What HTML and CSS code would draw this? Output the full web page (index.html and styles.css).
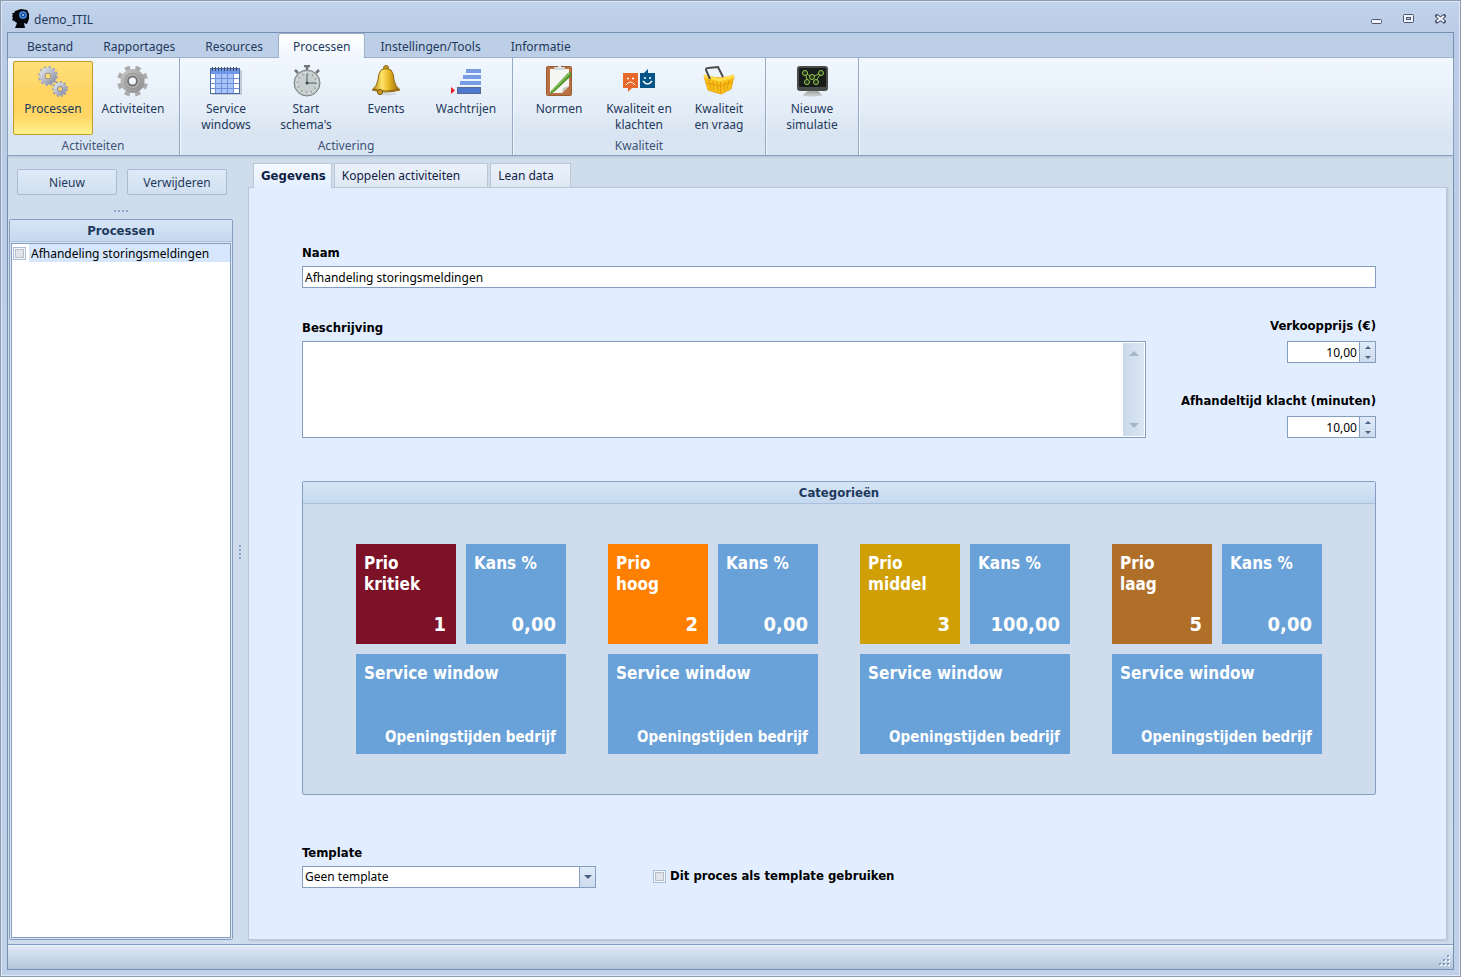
FILE: index.html
```html
<!DOCTYPE html>
<html lang="nl">
<head>
    <meta charset="UTF-8">
    <meta name="viewport" content="width=device-width, initial-scale=1.0">
    <title>demo_ITIL</title>
    <link rel="stylesheet" href="styles.css">
</head>
<body>
    <div class="window">
        <header class="titlebar">
            <svg class="app-icon" width="18" height="20" viewBox="0 0 18 20">
                <path d="M3 2 L9 0 L15 1 L17 5 L17 10 L15 15 L12 14 L13 19 L3 19 L5 14 L2 12 L0 11 L1 9 L0 7 L1 6 L0 4 L2 4 Z" fill="#05070d"/>
                <circle cx="11" cy="6" r="3" fill="#173a80" stroke="#3c7fd0" stroke-width="2"/>
                <circle cx="11" cy="6" r="1" fill="#b8dcff"/>
            </svg>
            <h1 class="title">demo_ITIL</h1>
            <div class="window-controls">
                <button aria-label="Minimaliseren"><svg width="11" height="11"><rect x="0.5" y="5.5" width="10" height="4" rx="1" fill="#f2f5fc" stroke="#4d5470"/></svg></button>
                <button aria-label="Maximaliseren"><svg width="11" height="11"><rect x="0.5" y="0.5" width="10" height="8" rx="1" fill="#f2f5fc" stroke="#4d5470"/><rect x="3.5" y="3.5" width="4" height="2" fill="#c0d0e8" stroke="#4d5470"/></svg></button>
                <button aria-label="Sluiten"><svg width="11" height="11"><path d="M2 2 L9 7.500 M9 2 L2 7.500" stroke="#4d5470" stroke-width="4" stroke-linecap="round"/><path d="M2 2 L9 7.500 M9 2 L2 7.500" stroke="#f5f8ff" stroke-width="2"/></svg></button>
            </div>
        </header>

        <div class="client">
            <nav class="ribbon-tabs">
                <button>Bestand</button>
                <button>Rapportages</button>
                <button>Resources</button>
                <button class="active">Processen</button>
                <button>Instellingen/Tools</button>
                <button>Informatie</button>
            </nav>

            <div class="ribbon">
                <section class="ribbon-group">
                    <div class="ribbon-buttons">
                        <button class="selected">
                            <svg width="32" height="32" viewBox="0 0 32 32">
                                <defs><linearGradient id="silver" x1="0" y1="0" x2="1" y2="1"><stop offset="0" stop-color="#dcdfe9"/><stop offset="1" stop-color="#8f94ad"/></linearGradient></defs>
                                <circle cx="11" cy="11" r="8.500" fill="none" stroke="#a3a7bb" stroke-width="3" stroke-dasharray="2.500 1.950"/>
                                <circle cx="11" cy="11" r="6" fill="none" stroke="url(#silver)" stroke-width="5"/>
                                <circle cx="11" cy="11" r="3" fill="none" stroke="#878ca4"/>
                                <circle cx="23" cy="24" r="6.500" fill="none" stroke="#989db4" stroke-width="3" stroke-dasharray="2 1.710"/>
                                <circle cx="23" cy="24" r="4.500" fill="none" stroke="url(#silver)" stroke-width="4"/>
                                <circle cx="23" cy="24" r="2.500" fill="none" stroke="#80859e"/>
                            </svg>
                            <span>Processen</span>
                        </button>
                        <button>
                            <svg width="32" height="32" viewBox="0 0 32 32">
                                <defs><linearGradient id="steel" x1="0" y1="0" x2="1" y2="1"><stop offset="0" stop-color="#c8c8c8"/><stop offset="1" stop-color="#8a8a8a"/></linearGradient></defs>
                                <circle cx="15.500" cy="16" r="13" fill="none" stroke="#acacac" stroke-width="5" stroke-dasharray="5 5.210" stroke-dashoffset="-2.500"/>
                                <circle cx="15.500" cy="16" r="12" fill="url(#steel)"/>
                                <circle cx="15.500" cy="16" r="8" fill="#969696"/>
                                <circle cx="15.500" cy="16" r="7" fill="#b5b5b5"/>
                                <circle cx="15.500" cy="16" r="4.500" fill="#f2f7fd" stroke="#747474" stroke-width="2"/>
                            </svg>
                            <span>Activiteiten</span>
                        </button>
                    </div>
                    <h2>Activiteiten</h2>
                </section>

                <section class="ribbon-group">
                    <div class="ribbon-buttons">
                        <button>
                            <svg width="32" height="32" viewBox="0 0 32 32">
                                <rect x="2" y="5" width="30" height="25" fill="#c3cbd9"/>
                                <rect x="0.500" y="3.500" width="29" height="25" fill="#fff" stroke="#4f6d9c"/>
                                <rect x="1" y="4" width="28" height="5" fill="#6f97e8"/>
                                <rect x="6" y="9" width="18" height="19" fill="#a9c4f8"/>
                                <path d="M5.500 9V28M11.500 9V28M17.500 9V28M23.500 9V28M1 13.500H29M1 18.500H29M1 23.500H29" stroke="#6d90dc" fill="none"/>
                                <path d="M2.500 6V2M5.500 6V2M8.500 6V2M11.500 6V2M14.500 6V2M17.500 6V2M20.500 6V2M23.500 6V2M26.500 6V2" stroke="#3f4a60" fill="none"/>
                            </svg>
                            <span>Service<br>windows</span>
                        </button>
                        <button>
                            <svg width="32" height="32" viewBox="0 0 32 32">
                                <path d="M14 1H20M17 1V5M5 5L8 8M29 5L26 8" stroke="#6d7476" stroke-width="2.500" fill="none"/>
                                <circle cx="17" cy="18" r="13" fill="#b3bcbb" stroke="#7c8585"/>
                                <circle cx="17" cy="18" r="11" fill="#c6cfcd" stroke="#dde4e3"/>
                                <circle cx="17" cy="18" r="9.500" fill="none" stroke="#8b9594" stroke-dasharray="1 3.970" stroke-width="2"/>
                                <path d="M17 9V18H26" stroke="#4a5a5f" fill="none"/>
                                <circle cx="17" cy="18" r="1.500" fill="#34474d"/>
                            </svg>
                            <span>Start<br>schema's</span>
                        </button>
                        <button>
                            <svg width="32" height="32" viewBox="0 0 32 32">
                                <defs><linearGradient id="gold" x1="0" y1="0" x2="1" y2="0"><stop offset="0" stop-color="#a87708"/><stop offset="0.350" stop-color="#ffe66c"/><stop offset="0.600" stop-color="#e7b726"/><stop offset="1" stop-color="#946307"/></linearGradient></defs>
                                <ellipse cx="17" cy="29" rx="10" ry="1.500" fill="#d3d8e0"/>
                                <circle cx="16" cy="3" r="2.500" fill="#c99a20" stroke="#8a6612"/>
                                <path d="M11 5Q16 2 21 5Q24 9 24 15Q25 21 30 25Q16 29 2 25Q7 21 8 15Q8 9 11 5Z" fill="url(#gold)" stroke="#94690f"/>
                                <path d="M4 24Q16 28 28 24" fill="none" stroke="#8f6611"/>
                                <circle cx="10" cy="27" r="2.500" fill="#d19d1c" stroke="#74520c"/>
                            </svg>
                            <span>Events</span>
                        </button>
                        <button>
                            <svg width="32" height="32" viewBox="0 0 32 32">
                                <path d="M16 4H31V8H16ZM13 10H31V14H13ZM10 16H31V20H10Z" fill="#789be6"/>
                                <rect x="7.500" y="22.500" width="23" height="6" fill="#4d78d0" stroke="#52688f"/>
                                <path d="M1 22L5 25.500L1 29Z" fill="#ec1c24"/>
                            </svg>
                            <span>Wachtrijen</span>
                        </button>
                    </div>
                    <h2>Activering</h2>
                </section>

                <section class="ribbon-group">
                    <div class="ribbon-buttons">
                        <button>
                            <svg width="32" height="32" viewBox="0 0 32 32">
                                <rect x="3.500" y="1.500" width="25" height="29" rx="1" fill="#b97042" stroke="#9a5c33"/>
                                <path d="M7 4H26V21L19 28H7Z" fill="#f5f6f2"/>
                                <path d="M26 21L19 28L20 23Z" fill="#c5c7c2"/>
                                <rect x="11" y="2" width="11" height="3" rx="1" fill="#d4d8dc"/>
                                <rect x="15" y="0" width="3" height="3" fill="#e4e7ea"/>
                                <path d="M7 29L8 26L25 8L28 7V11L11 27Z" fill="#4d9128"/>
                                <path d="M9 26L27 8" stroke="#8cc45c" stroke-width="1.500"/>
                            </svg>
                            <span>Normen</span>
                        </button>
                        <button>
                            <svg width="32" height="32" viewBox="0 0 32 32">
                                <path d="M0 8H15V23H9L5 27V23H0Z" fill="#e8682c"/>
                                <path d="M17 8H21L25 4V8H32V23H17Z" fill="#045487"/>
                                <path d="M3 20Q7.500 14 12 20" fill="none" stroke="#fff"/>
                                <path d="M20 16Q24.500 22 29 16" fill="none" stroke="#fff" stroke-width="1.500"/>
                                <path d="M4 13.500H6M9 13.500H11M21 13H23M26 13H28" stroke="#fff" stroke-width="1.500"/>
                            </svg>
                            <span>Kwaliteit en<br>klachten</span>
                        </button>
                        <button>
                            <svg width="32" height="32" viewBox="0 0 32 32">
                                <path d="M1 11L17 13L31 11L28 24L18 29L5 25Z" fill="#f9c01a" stroke="#eaa50c"/>
                                <path d="M1 11L17 15L31 11" fill="none" stroke="#ffdd4d" stroke-width="3"/>
                                <path d="M17.500 17V28M6 15L8 24M10 16L11 25M14 17L15 26M22 17L21 26M26 15L24 24M4 18L17 21L29 17" stroke="#e29a0a" fill="none"/>
                                <path d="M7 14L3 5Q3 3 5 3L15 2L20 12" fill="none" stroke="#4c4c4c" stroke-width="2"/>
                            </svg>
                            <span>Kwaliteit<br>en vraag</span>
                        </button>
                    </div>
                    <h2>Kwaliteit</h2>
                </section>

                <section class="ribbon-group">
                    <div class="ribbon-buttons">
                        <button>
                            <svg width="32" height="32" viewBox="0 0 32 32">
                                <rect x="1" y="1" width="31" height="25" rx="3" fill="#484c4b"/>
                                <rect x="3" y="3" width="27" height="19" rx="1" fill="#171d18"/>
                                <path d="M12 26H22L26 30H7Z" fill="#a9adad"/>
                                <ellipse cx="16.500" cy="30" rx="10" ry="1.500" fill="#c5c9c9"/>
                                <path d="M9 8L12 17M9 8L16 12L25 8L20 16" fill="none" stroke="#91bd4f"/>
                                <g fill="#25331c" stroke="#9acc55"><circle cx="9" cy="8" r="2.500"/><circle cx="16" cy="12" r="2.500"/><circle cx="25" cy="8" r="2.500"/><circle cx="11" cy="17" r="2.500"/><circle cx="20" cy="17" r="2.500"/></g>
                            </svg>
                            <span>Nieuwe<br>simulatie</span>
                        </button>
                    </div>
                </section>
            </div>

            <div class="workspace">
                <aside class="sidebar">
                    <div class="actions">
                        <button>Nieuw</button>
                        <button>Verwijderen</button>
                    </div>
                    <div class="grip"></div>
                    <section class="list-panel">
                        <h2>Processen</h2>
                        <div class="list">
                            <label><input type="checkbox"><span>Afhandeling storingsmeldingen</span></label>
                        </div>
                    </section>
                </aside>

                <div class="splitter"></div>

                <main class="main">
                    <div class="page-tabs">
                        <button class="active">Gegevens</button>
                        <button class="wide">Koppelen activiteiten</button>
                        <button>Lean data</button>
                    </div>

                    <form class="page">
                        <div class="field">
                            <label for="naam">Naam</label>
                            <input id="naam" type="text" value="Afhandeling storingsmeldingen">
                        </div>

                        <div class="details">
                            <div class="field description">
                                <label for="beschrijving">Beschrijving</label>
                                <div class="memo">
                                    <textarea id="beschrijving"></textarea>
                                    <div class="scrollbar"><i class="arrow up"></i><i class="arrow down"></i></div>
                                </div>
                            </div>
                            <div class="numbers">
                                <div class="field">
                                    <label for="prijs">Verkoopprijs (€)</label>
                                    <div class="spin">
                                        <input id="prijs" type="text" value="10,00">
                                        <div class="spin-buttons">
                                            <button type="button" aria-label="Omhoog"><i class="arrow up"></i></button>
                                            <button type="button" aria-label="Omlaag"><i class="arrow down"></i></button>
                                        </div>
                                    </div>
                                </div>
                                <div class="field">
                                    <label for="klacht">Afhandeltijd klacht (minuten)</label>
                                    <div class="spin">
                                        <input id="klacht" type="text" value="10,00">
                                        <div class="spin-buttons">
                                            <button type="button" aria-label="Omhoog"><i class="arrow up"></i></button>
                                            <button type="button" aria-label="Omlaag"><i class="arrow down"></i></button>
                                        </div>
                                    </div>
                                </div>
                            </div>
                        </div>

                        <section class="categories">
                            <h2>Categorieën</h2>
                            <div class="category-list">
                                <div class="category">
                                    <div class="tile critical"><h3>Prio<br>kritiek</h3><p>1</p></div>
                                    <div class="tile"><h3>Kans %</h3><p>0,00</p></div>
                                    <div class="tile service"><h3>Service window</h3><p>Openingstijden bedrijf</p></div>
                                </div>
                                <div class="category">
                                    <div class="tile high"><h3>Prio<br>hoog</h3><p>2</p></div>
                                    <div class="tile"><h3>Kans %</h3><p>0,00</p></div>
                                    <div class="tile service"><h3>Service window</h3><p>Openingstijden bedrijf</p></div>
                                </div>
                                <div class="category">
                                    <div class="tile medium"><h3>Prio<br>middel</h3><p>3</p></div>
                                    <div class="tile"><h3>Kans %</h3><p>100,00</p></div>
                                    <div class="tile service"><h3>Service window</h3><p>Openingstijden bedrijf</p></div>
                                </div>
                                <div class="category">
                                    <div class="tile low"><h3>Prio<br>laag</h3><p>5</p></div>
                                    <div class="tile"><h3>Kans %</h3><p>0,00</p></div>
                                    <div class="tile service"><h3>Service window</h3><p>Openingstijden bedrijf</p></div>
                                </div>
                            </div>
                        </section>

                        <div class="template-row">
                            <div class="field template">
                                <label for="template">Template</label>
                                <div class="combo">
                                    <select id="template"><option>Geen template</option></select>
                                    <span class="combo-button"><i class="arrow down"></i></span>
                                </div>
                            </div>
                            <label class="check"><input type="checkbox"><span>Dit proces als template gebruiken</span></label>
                        </div>
                    </form>
                </main>
            </div>

            <footer class="statusbar">
                <svg width="12" height="12"><path d="M10 2h2v2h-2zM6 6h2v2h-2zM10 6h2v2h-2zM2 10h2v2h-2zM6 10h2v2h-2zM10 10h2v2h-2z" fill="#fff"/><path d="M9 1h2v2h-2zM5 5h2v2h-2zM9 5h2v2h-2zM1 9h2v2h-2zM5 9h2v2h-2zM9 9h2v2h-2z" fill="#7f9dc4"/></svg>
            </footer>
        </div>
    </div>
</body>
</html>
```
FILE: styles.css
```css
* {
    margin: 0;
    padding: 0;
    box-sizing: border-box;
}
body {
    height: 100vh;
    font-family: Tahoma, "Noto Sans", sans-serif;
    font-size: 12px;
    line-height: 16px;
    color: #000;
}
button, input, select, textarea {
    font: inherit;
    color: inherit;
}
button {
    border: none;
    background: none;
    cursor: pointer;
}
h1, h2 {
    font-size: 12px;
    font-weight: normal;
}

/* bold captions */
.list-panel h2,
.categories h2,
.page-tabs .active,
.field label,
.check,
.tile {
    font-family: Tahoma, "DejaVu Sans Condensed", "DejaVu Sans", sans-serif;
    font-size: 13px;
    font-weight: bold;
}

/* window frame */
.window {
    display: flex;
    flex-direction: column;
    min-height: 100vh;
    padding: 1px 6px 6px;
    border: 1px solid #8e9bae;
    background: linear-gradient(#c2d4ec, #bbcde6 30px, #bfd1e9);
    box-shadow: inset 0 0 0 1px #dce8f6;
}
.titlebar {
    display: flex;
    align-items: center;
    height: 30px;
    padding: 4px 8px 0 5px;
    color: #1e395b;
}
.title {
    flex: 1;
    padding-top: 2px;
    margin-left: 4px;
}
.window-controls {
    display: flex;
    gap: 21px;
}
.window-controls svg {
    display: block;
}
.client {
    flex: 1;
    display: flex;
    flex-direction: column;
    border: 1px solid #7390b3;
    background: #cfdcec;
}

/* ribbon */
.ribbon-tabs {
    display: flex;
    height: 25px;
    padding-left: 4px;
    border-bottom: 1px solid #9db0ca;
    background: #bdcfe7;
}
.ribbon-tabs button {
    padding: 4px 15px 0;
    color: #1e395b;
}
.ribbon-tabs .active {
    height: 25px;
    padding: 2px 14px 0;
    border: 1px solid #9db0ca;
    border-bottom: none;
    border-radius: 3px 3px 0 0;
    background: linear-gradient(#fff, #f0f6fe);
}
.ribbon {
    display: flex;
    height: 98px;
    border-bottom: 1px solid #8ba0bc;
    background: linear-gradient(#f0f7ff, #e5eef8 50%, #d8e4f1 80%, #dae6f3);
    box-shadow: 0 1px 2px #b0bfd2;
}
.ribbon-group {
    display: flex;
    flex-direction: column;
    padding: 3px 6px 0;
    border-right: 1px solid #93a9c7;
    box-shadow: 1px 0 #f3f8fd;
}
.ribbon-group:first-child {
    padding-left: 5px;
}
.ribbon-buttons {
    display: flex;
}
.ribbon-buttons button {
    display: flex;
    flex-direction: column;
    align-items: center;
    gap: 4px;
    width: 80px;
    height: 74px;
    padding-top: 3px;
    border: 1px solid transparent;
    border-radius: 2px;
    color: #1e395b;
}
.ribbon-buttons .selected {
    border-color: #c29b29;
    background: linear-gradient(#ffe07a, #ffd461 45%, #ffd766 75%, #fff18c);
}
.ribbon-group h2 {
    margin-top: 3px;
    text-align: center;
    color: #3d5377;
}

/* workspace */
.workspace {
    flex: 1;
    display: flex;
    padding: 7px 6px 4px 1px;
}
.sidebar {
    display: flex;
    flex-direction: column;
    width: 224px;
}
.actions {
    display: flex;
    gap: 10px;
    padding: 6px 6px 0 8px;
}
.actions button {
    flex: 1;
    height: 26px;
    padding-top: 2px;
    border: 1px solid #a9bad2;
    border-radius: 2px;
    background: linear-gradient(#dfeaf7, #d0dff0);
    color: #1e395b;
}
.grip {
    align-self: center;
    width: 14px;
    height: 2px;
    margin: 15px 0 7px;
    background: repeating-linear-gradient(90deg, #8ba3c7 0 2px, transparent 2px 4px);
}
.list-panel {
    flex: 1;
    display: flex;
    flex-direction: column;
    padding: 0 1px 1px;
    border: 1px solid #859ebf;
    border-radius: 2px;
    background: #dbe7f5;
}
.list-panel h2, .categories h2 {
    height: 22px;
    line-height: 22px;
    border-bottom: 1px solid #a9c1dd;
    background: linear-gradient(#d6e6f6, #c5d8ef);
    text-align: center;
    color: #1e395b;
}
.list-panel h2 {
    margin: 0 -1px 1px;
}
.list {
    flex: 1;
    border: 1px solid #859ebf;
    background: #fff;
}
.list label {
    display: flex;
    align-items: center;
    gap: 3px;
    height: 18px;
    padding-left: 1px;
}
.list label span {
    flex: 1;
    padding: 2px 2px 0;
    background: #d5e6fd;
}
input[type="checkbox"] {
    appearance: none;
    width: 13px;
    height: 13px;
    border: 1px solid #a9bedb;
    background: #e2e4e8;
    box-shadow: inset 0 0 0 1px #f6f9fd, inset 0 0 0 2px #b9bdc6;
}
.splitter {
    align-self: center;
    width: 2px;
    height: 14px;
    margin: 0 7px 0 6px;
    background: repeating-linear-gradient(#8ba3c7 0 2px, transparent 2px 4px);
}

/* page with its tabs */
.main {
    flex: 1;
    display: flex;
    flex-direction: column;
}
.page-tabs {
    display: flex;
    gap: 2px;
    height: 24px;
    padding-left: 5px;
}
.page-tabs button {
    padding: 0 16px 0 7px;
    border: 1px solid #bcc7d6;
    border-bottom: none;
    background: linear-gradient(#eaf1fb, #dfe8f4);
    color: #0f2145;
}
.page-tabs .wide {
    padding-right: 27px;
}
.page-tabs .active {
    z-index: 1;
    height: 25px;
    padding: 0 5px 0 7px;
    background: linear-gradient(#f5f9ff, #e2eeff);
}
.page {
    flex: 1;
    padding: 57px 70px 20px 53px;
    border: 1px solid #bcc7d2;
    background: #e2eeff;
    box-shadow: 1px 1px 2px #b5c2d1;
}
.field {
    display: flex;
    flex-direction: column;
    gap: 5px;
}
.field input {
    height: 22px;
    padding: 0 2px;
    border: 1px solid #859ebf;
    background: #fff;
}
.details {
    display: flex;
    justify-content: space-between;
    gap: 40px;
    margin-top: 30px;
}
.description {
    flex: 1;
    padding-top: 2px;
}
.memo {
    display: flex;
    height: 97px;
    padding: 1px;
    border: 1px solid #859ebf;
    background: #fff;
}
.memo textarea {
    flex: 1;
    padding: 2px;
    border: none;
    resize: none;
}
.scrollbar {
    display: flex;
    flex-direction: column;
    justify-content: space-between;
    align-items: center;
    width: 21px;
    padding: 8px 0;
    background: linear-gradient(90deg, #cbd9ea, #dbe6f3);
}
.arrow {
    border: 4px solid transparent;
}
.arrow.up {
    border-top: none;
    border-bottom-color: #4c6184;
}
.arrow.down {
    border-bottom: none;
    border-top-color: #4c6184;
}
.scrollbar .arrow {
    border-width: 5px;
}
.scrollbar .up {
    border-top: none;
    border-bottom-color: #a5b5ca;
}
.scrollbar .down {
    border-bottom: none;
    border-top-color: #a5b5ca;
}
.numbers {
    display: flex;
    flex-direction: column;
    justify-content: space-between;
}
.numbers .field {
    align-items: flex-end;
    gap: 7px;
    width: 200px;
}
.details {
    gap: 30px;
}
.spin {
    display: flex;
    width: 89px;
    height: 22px;
    border: 1px solid #859ebf;
    background: #fff;
}
.spin input {
    flex: 1;
    min-width: 0;
    height: 20px;
    border: none;
    text-align: right;
}
.spin-buttons {
    display: flex;
    flex-direction: column;
    width: 16px;
    border-left: 1px solid #859ebf;
    background: linear-gradient(#e0ebf8, #ccdcee);
}
.spin-buttons button {
    flex: 1;
    display: flex;
    justify-content: center;
    align-items: center;
}
.spin-buttons .arrow {
    border-left-width: 3px;
    border-right-width: 3px;
}
.spin-buttons .up {
    border-bottom-width: 3px;
}
.spin-buttons .down {
    border-top-width: 3px;
}

/* category tiles */
.categories {
    margin-top: 43px;
    border: 1px solid #859ebf;
    border-radius: 2px;
    background: #cfdcec;
}
.category-list {
    display: flex;
    justify-content: center;
    gap: 42px;
    padding: 40px 20px;
}
.category {
    display: grid;
    grid-template-columns: 100px 100px;
    gap: 10px;
}
.tile {
    display: flex;
    flex-direction: column;
    justify-content: space-between;
    height: 100px;
    padding: 9px 10px 8px 8px;
    background: #69a1d9;
    color: #fff;
}
.tile h3 {
    font-size: 17px;
    line-height: 21px;
}
.tile p {
    font-size: 20px;
    line-height: 24px;
    text-align: right;
}
.tile.service {
    grid-column: span 2;
}
.tile.service p {
    font-size: 15px;
    line-height: 18px;
}
.critical {
    background: #7d1128;
}
.high {
    background: #ff8000;
}
.medium {
    background: #d09f05;
}
.low {
    background: #b06f29;
}

.template-row {
    display: flex;
    align-items: flex-end;
    gap: 57px;
    margin-top: 50px;
}
.template {
    width: 294px;
}
.combo {
    display: flex;
    position: relative;
    height: 22px;
    border: 1px solid #859ebf;
    background: #fff;
}
.combo select {
    flex: 1;
    appearance: none;
    padding: 0 18px 0 2px;
    border: none;
    background: none;
}
.combo-button {
    position: absolute;
    top: 0;
    right: 0;
    bottom: 0;
    display: flex;
    justify-content: center;
    align-items: center;
    width: 16px;
    border-left: 1px solid #859ebf;
    background: linear-gradient(#e0ebf8, #ccdcee);
    pointer-events: none;
}
.check {
    display: flex;
    align-items: center;
    gap: 4px;
    margin-bottom: 4px;
}

/* status bar */
.statusbar {
    display: flex;
    justify-content: flex-end;
    align-items: flex-end;
    height: 25px;
    padding: 3px;
    border-top: 1px solid #7f9cc0;
    background: linear-gradient(#f0f5fb, #dce7f4 2px, #b4c6db);
}
```
